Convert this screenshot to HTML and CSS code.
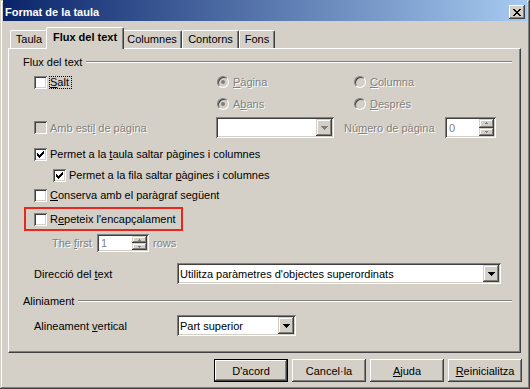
FILE: index.html
```html
<!DOCTYPE html>
<html lang="ca">
<head>
    <meta charset="UTF-8">
    <title>Format de la taula</title>
    <link rel="stylesheet" href="styles.css">
</head>
<body>

<div class="window">
    <div class="titlebar">
        <span class="title">Format de la taula</span>
        <button class="close">
            <svg width="8" height="7" viewBox="0 0 8 7"><path d="M0 0h2v1h-2z M6 0h2v1h-2z M1 1h2v1h-2z M5 1h2v1h-2z M2 2h4v1h-4z M3 3h2v1h-2z M2 4h4v1h-4z M1 5h2v1h-2z M5 5h2v1h-2z M0 6h2v1h-2z M6 6h2v1h-2z" fill="#000"/></svg>
        </button>
    </div>

    <div class="tabs">
        <div class="tab t-taula">Taula</div>
        <div class="tab active">Flux del text</div>
        <div class="tab t-col">Columnes</div>
        <div class="tab t-cont">Contorns</div>
        <div class="tab t-fons">Fons</div>
    </div>

    <div class="panel">
        <div class="gtitle"><span>Flux del text</span><i class="gline"></i></div>

        <div class="row r-salt">
            <div class="col1"><span class="cb"></span><span class="focus"><u>S</u>alt</span></div>
            <div class="col2"><span class="rb on"></span><span class="dis"><u>P</u>àgina</span></div>
            <div class="col3"><span class="rb"></span><span class="dis"><u>C</u>olumna</span></div>
        </div>

        <div class="row r-abans">
            <div class="col1"></div>
            <div class="col2"><span class="rb on"></span><span class="dis">A<u>b</u>ans</span></div>
            <div class="col3"><span class="rb"></span><span class="dis"><u>D</u>esprés</span></div>
        </div>

        <div class="row r-amb">
            <div class="col1 narrow"><span class="cb off"></span><span class="dis">Amb esti<u>l</u> de pàgina</span></div>
            <div class="combo w-amb">
                <span class="val"></span>
                <span class="drop"><svg width="7" height="4" viewBox="0 0 7 4"><path d="M0 0h7v1h-1v1h-1v1h-1v1h-1v-1h-1v-1h-1v-1h-1z" fill="#808080"/></svg></span>
            </div>
            <span class="dis num-lbl">Nú<u>m</u>ero de pàgina</span>
            <div class="spin w-num">
                <span class="sval dis">0</span>
                <span class="arrows">
                    <span class="sbtn"><svg width="3" height="2" viewBox="0 0 3 2"><path d="M1 0h1v1h-1z M0 1h3v1h-3z" fill="#808080"/></svg></span>
                    <span class="sbtn"><svg width="3" height="2" viewBox="0 0 3 2"><path d="M0 0h3v1h-3z M1 1h1v1h-1z" fill="#808080"/></svg></span>
                </span>
            </div>
        </div>

        <div class="row r-taula">
            <span class="cb"><svg width="7" height="7" viewBox="0 0 7 7"><path d="M6 0h1v1h-1z M5 1h2v1h-2z M0 2h1v1h-1z M4 2h3v1h-3z M0 3h2v1h-2z M3 3h3v1h-3z M0 4h5v1h-5z M1 5h3v1h-3z M2 6h1v1h-1z" fill="#000"/></svg></span>
            <span>Permet a la <u>t</u>aula saltar pàgines i columnes</span>
        </div>

        <div class="row r-fila">
            <span class="cb"><svg width="7" height="7" viewBox="0 0 7 7"><path d="M6 0h1v1h-1z M5 1h2v1h-2z M0 2h1v1h-1z M4 2h3v1h-3z M0 3h2v1h-2z M3 3h3v1h-3z M0 4h5v1h-5z M1 5h3v1h-3z M2 6h1v1h-1z" fill="#000"/></svg></span>
            <span>Permet a la fila saltar <u>p</u>àgines i columnes</span>
        </div>

        <div class="row r-conserva">
            <span class="cb"></span>
            <span><u>C</u>onserva amb el paràgraf següent</span>
        </div>

        <div class="hl">
            <span class="cb"></span>
            <span>R<u>e</u>peteix l'encapçalament</span>
        </div>

        <div class="row r-first">
            <span class="dis first-lbl">The <u>f</u>irst</span>
            <div class="spin w-first">
                <span class="sval dis">1</span>
                <span class="arrows">
                    <span class="sbtn"><svg width="3" height="2" viewBox="0 0 3 2"><path d="M1 0h1v1h-1z M0 1h3v1h-3z" fill="#808080"/></svg></span>
                    <span class="sbtn"><svg width="3" height="2" viewBox="0 0 3 2"><path d="M0 0h3v1h-3z M1 1h1v1h-1z" fill="#808080"/></svg></span>
                </span>
            </div>
            <span class="dis rows-lbl">rows</span>
        </div>

        <div class="row r-dir">
            <span class="flbl">Direcció del <u>t</u>ext</span>
            <div class="combo w-dir">
                <span class="val">Utilitza paràmetres d'objectes superordinats</span>
                <span class="drop"><svg width="7" height="4" viewBox="0 0 7 4"><path d="M0 0h7v1h-1v1h-1v1h-1v1h-1v-1h-1v-1h-1v-1h-1z" fill="#000"/></svg></span>
            </div>
        </div>

        <div class="gtitle g-alin"><span>Aliniament</span><i class="gline"></i></div>

        <div class="row r-vert">
            <span class="flbl">Alineament <u>v</u>ertical</span>
            <div class="combo w-vert">
                <span class="val">Part superior</span>
                <span class="drop"><svg width="7" height="4" viewBox="0 0 7 4"><path d="M0 0h7v1h-1v1h-1v1h-1v1h-1v-1h-1v-1h-1v-1h-1z" fill="#000"/></svg></span>
            </div>
        </div>
    </div>

    <div class="buttons">
        <button class="btn default">D'acord</button>
        <button class="btn">Cancel·la</button>
        <button class="btn"><u>A</u>juda</button>
        <button class="btn"><u>R</u>einicialitza</button>
    </div>
</div>

</body>
</html>
```

FILE: styles.css
```css
body {
    margin: 0;
    font-family: "Liberation Sans", Arial, sans-serif;
    font-size: 11px;
    color: #000;
}
u {
    text-decoration: underline;
    text-underline-offset: 1px;
}

/* window frame */
.window {
    width: 530px;
    height: 389px;
    box-sizing: border-box;
    padding: 0 3px 3px 3px;
    background: #d4d0c8;
    box-shadow: inset -1px -1px #404040, inset 1px 1px #d4d0c8, inset -2px -2px #808080, inset 2px 2px #fff;
}
.titlebar {
    height: 21px;
    box-sizing: border-box;
    padding: 3px 2px 0 2px;
    display: flex;
    align-items: center;
    justify-content: space-between;
    background: linear-gradient(to right, #0a246a, #a6caf0);
    color: #fff;
    font-weight: bold;
}
.close {
    width: 16px;
    height: 14px;
    padding: 0;
    border: none;
    background: #d4d0c8;
    display: flex;
    align-items: center;
    justify-content: center;
    box-shadow: inset -1px -1px #404040, inset 1px 1px #fff, inset -2px -2px #808080;
}

/* tabs */
.tabs {
    display: flex;
    align-items: flex-end;
    height: 21px;
    margin: 6px 0 0 5px;
    padding-left: 2px;
}
.tab {
    height: 18px;
    box-sizing: border-box;
    border-top: 1px solid #fff;
    border-left: 1px solid #fff;
    border-right: 1px solid #404040;
    border-radius: 2px 2px 0 0;
    box-shadow: inset -1px 0 #808080;
    display: flex;
    align-items: center;
    justify-content: center;
    padding-bottom: 1px;
    background: #d4d0c8;
}
.t-taula { width: 38px; }
.t-col { width: 60px; }
.t-cont { width: 57px; }
.t-fons { width: 36px; }
.tab.active {
    width: 78px;
    height: 22px;
    margin: 0 -2px -1px -2px;
    padding-bottom: 3px;
    font-weight: bold;
    position: relative;
    z-index: 2;
}

/* page */
.panel {
    margin-left: 5px;
    width: 513px;
    height: 305px;
    box-sizing: border-box;
    border-top: 1px solid #fff;
    border-left: 1px solid #fff;
    border-right: 1px solid #404040;
    border-bottom: 1px solid #404040;
    box-shadow: inset -1px -1px #808080;
    padding-top: 3px;
}
.gtitle {
    height: 20px;
    display: flex;
    align-items: center;
    padding: 0 8px 0 14px;
}
.gline {
    flex: 1;
    height: 0;
    margin-left: 4px;
    border-top: 1px solid #808080;
    border-bottom: 1px solid #fff;
}
.g-alin { margin-top: 7px; }

.row {
    height: 20px;
    display: flex;
    align-items: center;
    padding-left: 25px;
}
.col1 { width: 183px; display: flex; align-items: center; }
.col1.narrow { width: 182px; }
.col2 { width: 137px; display: flex; align-items: center; }
.col3 { display: flex; align-items: center; }

.r-abans { margin-top: 2px; }
.r-amb { margin-top: 3px; height: 21px; }
.r-taula { margin-top: 6px; }
.r-fila { margin-top: 1px; padding-left: 44px; }
.r-first { margin-top: 2px; padding-left: 43px; }
.r-dir { margin-top: 10px; height: 21px; }
.r-vert { margin-top: 4px; height: 21px; }

.dis {
    color: #808080;
    text-shadow: 1px 1px 0 #fff;
}
.focus {
    margin-left: -1px;
    padding-right: 2px;
    border: 1px dotted #000;
    line-height: 11px;
}

/* checkbox and radio */
.cb {
    width: 13px;
    height: 13px;
    flex: none;
    box-sizing: border-box;
    margin-right: 3px;
    background: #fff;
    display: flex;
    align-items: center;
    justify-content: center;
    box-shadow: inset 1px 1px #808080, inset -1px -1px #fff, inset 2px 2px #404040, inset -2px -2px #d4d0c8;
}
.cb.off { background: #d4d0c8; }
.rb {
    width: 12px;
    height: 12px;
    flex: none;
    box-sizing: border-box;
    margin-right: 4px;
    border-radius: 50%;
    border: 1px solid;
    border-color: #808080 #fff #fff #808080;
    box-shadow: inset 1px 1px #404040;
    background: #d4d0c8;
    display: flex;
    align-items: center;
    justify-content: center;
}
.rb.on::after {
    content: "";
    width: 4px;
    height: 4px;
    border-radius: 50%;
    background: #808080;
}

/* highlighted option */
.hl {
    margin: 2px 0 0 15px;
    width: 159px;
    height: 24px;
    box-sizing: border-box;
    border: 2px solid #e8281e;
    display: flex;
    align-items: center;
    padding-left: 8px;
}

/* combo and spin fields */
.combo, .spin {
    display: flex;
    box-sizing: border-box;
    padding: 2px;
    background: #fff;
    box-shadow: inset 1px 1px #808080, inset -1px -1px #fff, inset 2px 2px #404040, inset -2px -2px #d4d0c8;
}
.combo { height: 21px; }
.combo .val {
    flex: 1;
    display: flex;
    align-items: center;
    padding-left: 1px;
    white-space: nowrap;
}
.drop, .sbtn {
    background: #d4d0c8;
    display: flex;
    align-items: center;
    justify-content: center;
    box-shadow: inset -1px -1px #404040, inset 1px 1px #d4d0c8, inset -2px -2px #808080, inset 2px 2px #fff;
}
.drop { width: 16px; }
.w-amb { width: 118px; }
.w-dir { width: 324px; }
.w-vert { width: 119px; }

.num-lbl { margin-left: 10px; width: 101px; }
.spin { height: 21px; }
.w-num { width: 51px; }
.w-first { width: 52px; height: 18px; }
.sval {
    flex: 1;
    display: flex;
    align-items: center;
    padding-left: 2px;
}
.arrows {
    width: 15px;
    display: flex;
    flex-direction: column;
}
.sbtn { flex: 1; }
.first-lbl { width: 45px; }
.rows-lbl { margin-left: 4px; }
.flbl { width: 143px; }

/* bottom buttons */
.buttons {
    display: flex;
    justify-content: flex-end;
    gap: 4px;
    margin-top: 6px;
    padding-right: 5px;
}
.btn {
    width: 74px;
    height: 23px;
    padding: 0;
    border: none;
    background: #d4d0c8;
    font-family: inherit;
    font-size: 11px;
    color: #000;
    box-shadow: inset -1px -1px #404040, inset 1px 1px #fff, inset -2px -2px #808080, inset 2px 2px #d4d0c8;
}
.btn.default {
    box-shadow: inset 0 0 0 1px #000, inset -2px -2px #404040, inset 2px 2px #fff, inset -3px -3px #808080;
}
```
